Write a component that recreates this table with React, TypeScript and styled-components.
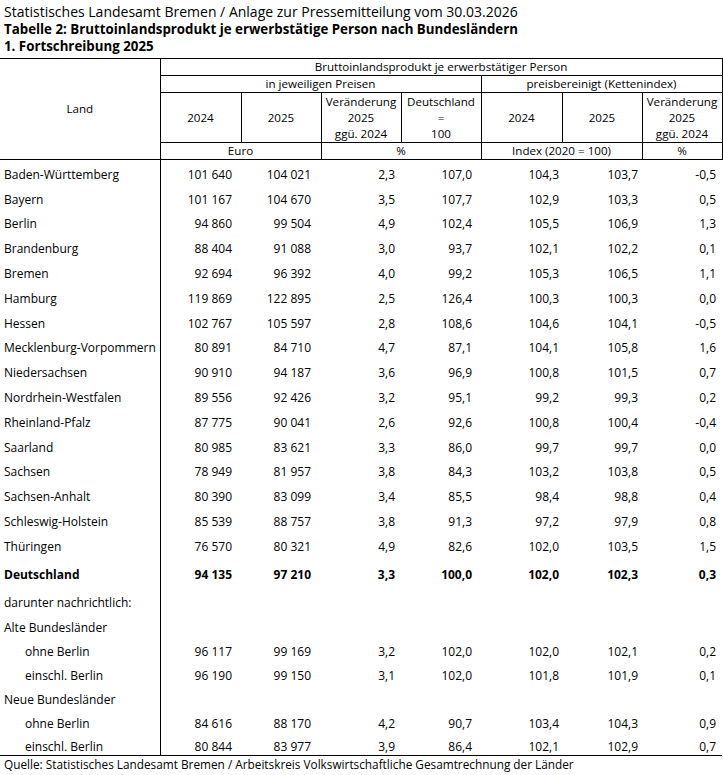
import React from "react";
import styled, { createGlobalStyle } from "styled-components";

const GlobalStyle = createGlobalStyle`
  html, body {
    margin: 0;
    padding: 0;
    background: #ffffff;
  }
  body {
    font-family: "Open Sans", "Noto Sans", sans-serif;
    color: #000000;
  }
`;

const Page = styled.div`
  width: 723px;
  display: flex;
  flex-direction: column;
`;

const TitleBlock = styled.header`
  display: flex;
  flex-direction: column;
  padding: 3px 0 0 4px;
  margin-bottom: 3px;
`;

const TitleLine = styled.div<{ $bold?: boolean }>`
  font-size: ${(p) => (p.$bold ? "13.3px" : "14px")};
  font-weight: ${(p) => (p.$bold ? 700 : 400)};
  line-height: ${(p) => (p.$bold ? "17px" : "18px")};
  white-space: nowrap;
`;

const Table = styled.table`
  width: 722px;
  border-collapse: collapse;
  table-layout: fixed;
  font-size: 12px;
`;

const HeadRow = styled.tr<{ $h: number }>`
  height: ${(p) => p.$h}px;
`;

const HeadCell = styled.th<{ $noLeft?: boolean }>`
  border: 1px solid #000000;
  border-left: ${(p) => (p.$noLeft ? "none" : "1px solid #000000")};
  font-weight: 400;
  font-size: 11.6px;
  line-height: 16px;
  text-align: center;
  vertical-align: middle;
  padding: 0;
  white-space: nowrap;
`;

const Body = styled.tbody`
  border-bottom: 1px solid #000000;
`;

const BodyRow = styled.tr<{ $h: number; $bold?: boolean }>`
  height: ${(p) => p.$h}px;
  font-weight: ${(p) => (p.$bold ? 700 : 400)};
`;

const NameCell = styled.td<{ $indent?: boolean }>`
  border-right: 1px solid #000000;
  padding: 5px 0 0 ${(p) => (p.$indent ? 25 : 4)}px;
  line-height: 15px;
  text-align: left;
  vertical-align: middle;
  white-space: nowrap;
`;

const NumCell = styled.td<{ $pr: number }>`
  padding: 5px ${(p) => p.$pr}px 0 0;
  line-height: 15px;
  text-align: right;
  vertical-align: middle;
  white-space: nowrap;
`;

const Source = styled.div`
  padding-left: 4px;
  font-size: 11.8px;
  line-height: 16px;
  white-space: nowrap;
`;

type Row = {
  name: string;
  values?: string[];
  indent?: boolean;
  bold?: boolean;
  h: number;
};

const states: [string, ...string[]][] = [
  ["Baden-Württemberg", "101 640", "104 021", "2,3", "107,0", "104,3", "103,7", "-0,5"],
  ["Bayern", "101 167", "104 670", "3,5", "107,7", "102,9", "103,3", "0,5"],
  ["Berlin", "94 860", "99 504", "4,9", "102,4", "105,5", "106,9", "1,3"],
  ["Brandenburg", "88 404", "91 088", "3,0", "93,7", "102,1", "102,2", "0,1"],
  ["Bremen", "92 694", "96 392", "4,0", "99,2", "105,3", "106,5", "1,1"],
  ["Hamburg", "119 869", "122 895", "2,5", "126,4", "100,3", "100,3", "0,0"],
  ["Hessen", "102 767", "105 597", "2,8", "108,6", "104,6", "104,1", "-0,5"],
  ["Mecklenburg-Vorpommern", "80 891", "84 710", "4,7", "87,1", "104,1", "105,8", "1,6"],
  ["Niedersachsen", "90 910", "94 187", "3,6", "96,9", "100,8", "101,5", "0,7"],
  ["Nordrhein-Westfalen", "89 556", "92 426", "3,2", "95,1", "99,2", "99,3", "0,2"],
  ["Rheinland-Pfalz", "87 775", "90 041", "2,6", "92,6", "100,8", "100,4", "-0,4"],
  ["Saarland", "80 985", "83 621", "3,3", "86,0", "99,7", "99,7", "0,0"],
  ["Sachsen", "78 949", "81 957", "3,8", "84,3", "103,2", "103,8", "0,5"],
  ["Sachsen-Anhalt", "80 390", "83 099", "3,4", "85,5", "98,4", "98,8", "0,4"],
  ["Schleswig-Holstein", "85 539", "88 757", "3,8", "91,3", "97,2", "97,9", "0,8"],
  ["Thüringen", "76 570", "80 321", "4,9", "82,6", "102,0", "103,5", "1,5"],
];

const rows: Row[] = [
  ...states.map(([name, ...values]) => ({ name, values, h: 24.8 })),
  { name: "Deutschland", values: ["94 135", "97 210", "3,3", "100,0", "102,0", "102,3", "0,3"], bold: true, h: 30.5 },
  { name: "darunter nachrichtlich:", h: 26.2 },
  { name: "Alte Bundesländer", h: 24 },
  { name: "ohne Berlin", indent: true, values: ["96 117", "99 169", "3,2", "102,0", "102,0", "102,1", "0,2"], h: 24 },
  { name: "einschl. Berlin", indent: true, values: ["96 190", "99 150", "3,1", "102,0", "101,8", "101,9", "0,1"], h: 24 },
  { name: "Neue Bundesländer", h: 24 },
  { name: "ohne Berlin", indent: true, values: ["84 616", "88 170", "4,2", "90,7", "103,4", "104,3", "0,9"], h: 24 },
  { name: "einschl. Berlin", indent: true, values: ["80 844", "83 977", "3,9", "86,4", "102,1", "102,9", "0,7"], h: 23 },
];

const paddings = [9, 10, 6, 9, 3, 4, 6];
const colWidths = [160, 81, 80, 80, 80, 81, 80, 80];

export default function App() {
  return (
    <Page>
      <GlobalStyle />
      <TitleBlock>
        <TitleLine>Statistisches Landesamt Bremen / Anlage zur Pressemitteilung vom 30.03.2026</TitleLine>
        <TitleLine $bold>Tabelle 2: Bruttoinlandsprodukt je erwerbstätige Person nach Bundesländern</TitleLine>
        <TitleLine $bold>1. Fortschreibung 2025</TitleLine>
      </TitleBlock>
      <Table>
        <colgroup>
          {colWidths.map((w, i) => (
            <col key={i} style={{ width: w }} />
          ))}
        </colgroup>
        <thead>
          <HeadRow $h={17}>
            <HeadCell rowSpan={4} $noLeft>
              Land
            </HeadCell>
            <HeadCell colSpan={7}>Bruttoinlandsprodukt je erwerbstätiger Person</HeadCell>
          </HeadRow>
          <HeadRow $h={16}>
            <HeadCell colSpan={4}>in jeweiligen Preisen</HeadCell>
            <HeadCell colSpan={3}>preisbereinigt (Kettenindex)</HeadCell>
          </HeadRow>
          <HeadRow $h={50}>
            <HeadCell>2024</HeadCell>
            <HeadCell>2025</HeadCell>
            <HeadCell>
              Veränderung
              <br />
              2025
              <br />
              ggü. 2024
            </HeadCell>
            <HeadCell>
              Deutschland
              <br />
              =
              <br />
              100
            </HeadCell>
            <HeadCell>2024</HeadCell>
            <HeadCell>2025</HeadCell>
            <HeadCell>
              Veränderung
              <br />
              2025
              <br />
              ggü. 2024
            </HeadCell>
          </HeadRow>
          <HeadRow $h={16}>
            <HeadCell colSpan={2}>Euro</HeadCell>
            <HeadCell colSpan={2}>%</HeadCell>
            <HeadCell colSpan={2}>Index (2020 = 100)</HeadCell>
            <HeadCell>%</HeadCell>
          </HeadRow>
        </thead>
        <Body>
          {rows.map((r, i) => (
            <BodyRow key={i} $h={r.h} $bold={r.bold}>
              <NameCell $indent={r.indent}>{r.name}</NameCell>
              {paddings.map((pr, j) => (
                <NumCell key={j} $pr={pr}>
                  {r.values ? r.values[j] : ""}
                </NumCell>
              ))}
            </BodyRow>
          ))}
        </Body>
      </Table>
      <Source>Quelle: Statistisches Landesamt Bremen / Arbeitskreis Volkswirtschaftliche Gesamtrechnung der Länder</Source>
    </Page>
  );
}
